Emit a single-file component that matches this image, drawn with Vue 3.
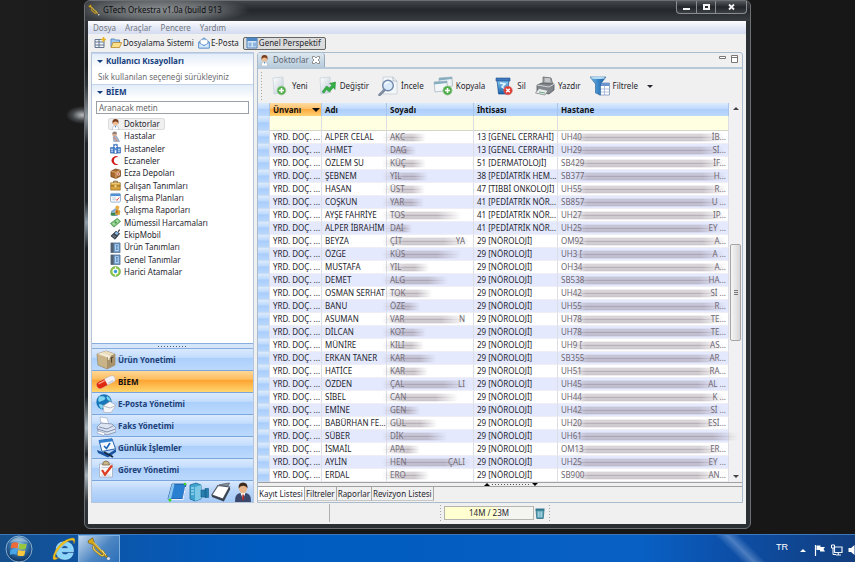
<script setup>
import { ref } from 'vue'

const menus = ['Dosya', 'Araçlar', 'Pencere', 'Yardım']

const tree = [
  ['doctor', 'Doktorlar'],
  ['patient', 'Hastalar'],
  ['hospital', 'Hastaneler'],
  ['crescent', 'Eczaneler'],
  ['crate', 'Ecza Depoları'],
  ['briefcase', 'Çalışan Tanımları'],
  ['calendar', 'Çalışma Planları'],
  ['report', 'Çalışma Raporları'],
  ['money', 'Mümessil Harcamaları'],
  ['mobile', 'EkipMobil'],
  ['book', 'Ürün Tanımları'],
  ['book', 'Genel Tanımlar'],
  ['sync', 'Harici Atamalar'],
]

const modules = [
  ['box', 'Ürün Yonetimi'],
  ['pill', 'BİEM'],
  ['globemail', 'E-Posta Yönetimi'],
  ['fax', 'Faks Yönetimi'],
  ['journal', 'Günlük İşlemler'],
  ['task', 'Görev Yönetimi'],
]

const shortcuts = [
  ['bluebook', 'Defter'],
  ['server', 'Sunucu'],
  ['notepad', 'Notlar'],
  ['person', 'Kullanıcı'],
]

const actions = [
  ['new', 'Yeni'],
  ['edit', 'Değiştir'],
  ['inspect', 'İncele'],
  ['copy', 'Kopyala'],
  ['trash', 'Sil'],
  ['print', 'Yazdır'],
  ['filter', 'Filtrele'],
]

const sheets = ['Kayıt Listesi', 'Filtreler', 'Raporlar', 'Revizyon Listesi']

const N = '29 [NÖROLOJİ]'
// name, visible surname start, smear width, visible surname end, specialty, hospital start, hospital end
const rows = [
  ['ALPER CELAL', 'AKC', 44, '', '13 [GENEL CERRAHİ]', 'UH40', 'İB...'],
  ['AHMET', 'DAG', 34, '', '13 [GENEL CERRAHİ]', 'UH29', 'Sİ...'],
  ['ÖZLEM SU', 'KÜÇ', 44, '', '51 [DERMATOLOJİ]', 'SB429', 'İF...'],
  ['ŞEBNEM', 'YIL', 46, '', '38 [PEDİATRİK HEM...', 'SB377', 'H...'],
  ['HASAN', 'ÜST', 43, '', '47 [TIBBİ ONKOLOJİ]', 'UH55', 'R...'],
  ['COŞKUN', 'YAR', 42, '', '41 [PEDİATRİK NÖR...', 'SB857', 'U ...'],
  ['AYŞE FAHRİYE', 'TOS', 79, '', '41 [PEDİATRİK NÖR...', 'UH27', 'IP...'],
  ['ALPER İBRAHİM', 'DAİ', 30, '', '41 [PEDİATRİK NÖR...', 'UH25', 'EY ...'],
  ['BEYZA', 'ÇİT', 88, 'YA', N, 'OM92', 'A...'],
  ['ÖZGE', 'KÜS', 79, '', N, 'UH3 [', 'A ...'],
  ['MUSTAFA', 'YIL', 47, '', N, 'OH34', 'A...'],
  ['DEMET', 'ALG', 66, '', N, 'SB538', 'HA...'],
  ['OSMAN SERHAT', 'TOK', 50, '', N, 'UH42', 'Sİ ...'],
  ['BANU', 'ÖZE', 38, '', N, 'UH55', 'R...'],
  ['ASUMAN', 'VAR', 85, 'N', N, 'UH78', 'TE...'],
  ['DİLCAN', 'KOT', 44, '', N, 'UH78', 'TE...'],
  ['MÜNİRE', 'KILI', 42, '', N, 'UH9 [', 'AS...'],
  ['ERKAN TANER', 'KAR', 54, '', N, 'SB355', 'AR...'],
  ['HATİCE', 'KAR', 46, '', N, 'UH51', 'RA...'],
  ['ÖZDEN', 'ÇAL', 88, 'LI', N, 'UH45', 'AL ...'],
  ['SİBEL', 'CAN', 76, '', N, 'UH44', 'K ...'],
  ['EMİNE', 'GEN', 38, '', N, 'UH42', 'Sİ ...'],
  ['BABÜRHAN FE...', 'GÜL', 55, '', N, 'UH20', 'ESİ...'],
  ['SÜBER', 'DİK', 65, '', N, 'UH61', ''],
  ['İSMAİL', 'APA', 38, '', N, 'OM13', 'ER...'],
  ['AYLİN', 'HEN', 89, 'ÇALI', N, 'UH25', 'EY ...'],
  ['ERDAL', 'ERO', 47, '', N, 'SB900', 'AN...'],
]

const query = ref('')
const selected = ref('Doktorlar')
const activeModule = ref('BİEM')
const activeSheet = ref('Kayıt Listesi')
</script>

<template>
  <svg class="sprite" width="0" height="0" aria-hidden="true">
    <defs>
      <linearGradient id="gBlue" x1="0" y1="0" x2="0" y2="1"><stop offset="0" stop-color="#8fd0f5" /><stop offset="1" stop-color="#1560a8" /></linearGradient>
      <linearGradient id="gPage" x1="0" y1="0" x2="1" y2="1"><stop offset="0" stop-color="#ffffff" /><stop offset="1" stop-color="#bccbd6" /></linearGradient>
      <linearGradient id="gFunnel" x1="0" y1="0" x2="1" y2="0"><stop offset="0" stop-color="#7dbbe6" /><stop offset=".5" stop-color="#3a87c8" /><stop offset="1" stop-color="#1c5c9c" /></linearGradient>
      <radialGradient id="gOrb" cx=".5" cy=".35" r=".65"><stop offset="0" stop-color="#9fd0ee" /><stop offset=".55" stop-color="#2f6da6" /><stop offset="1" stop-color="#0b2c57" /></radialGradient>
    </defs>
    <symbol id="i-trumpet" viewBox="0 0 24 24">
      <path d="M1 4 5.500.8 7.500 6 20.500 19.500 19 20.500 6 7.500 1.500 6Z" fill="#d6a91c" stroke="#6b4f06" stroke-width=".6" />
      <path d="M7 9q-1.500 2 1 4.500l5.500 4.500q3 1.500 3.500-.5T15 13.500" fill="none" stroke="#8a6a10" stroke-width="2.200" />
      <path d="M7 9q-1.500 2 1 4.500l5.500 4.500q3 1.500 3.500-.5T15 13.500" fill="none" stroke="#e8c850" stroke-width="1.200" />
      <path d="M7 5.500 19 18" stroke="#fff0a0" stroke-width=".8" /><circle cx="21.500" cy="21.500" r="1.600" fill="#ddd" />
    </symbol>
    <symbol id="i-perspective" viewBox="0 0 12 12">
      <path d="M1 2.500h9v8H1zM1 5h9M5 2.500v8M1 8h9" fill="#f3f8ff" stroke="#64758c" />
      <path d="M9.500 0v5M7 2.500h5" stroke="#e6b422" stroke-width="1.600" />
    </symbol>
    <symbol id="i-folder" viewBox="0 0 12 12">
      <path d="M1 10V2h3.500L5.500 3H9.500v3" fill="#9ec8f2" stroke="#4579b5" stroke-width=".8" />
      <path d="M3 5.500h8.700L9.500 10.500H1Z" fill="#fbe08c" stroke="#b8872a" stroke-width=".8" />
    </symbol>
    <symbol id="i-mail" viewBox="0 0 12 12">
      <path d="M.7 5 6 .8 11.300 5v6H.7Z" fill="#8fbdec" stroke="#4f87c4" stroke-width=".8" />
      <path d="M2.500 2.800h7v5h-7z" fill="#fff" stroke="#9ab" stroke-width=".4" /><path d="M.7 5.500 6 8.800l5.300-3.300V11H.7Z" fill="#d7eafc" stroke="#5a90cc" stroke-width=".8" />
    </symbol>
    <symbol id="i-window" viewBox="0 0 12 12">
      <path d="M1 1h10v10H1z" fill="#d3e5f7" stroke="#4b7cb5" /><path d="M1 1h10v3H1z" fill="#4d88c6" /><path d="M2.500 5.500h3v4h-3zM7 5.500h3v4H7z" fill="#8bb5e0" />
    </symbol>
    <symbol id="i-doctor" viewBox="0 0 12 12">
      <path d="M2.500 12q0-5 3.500-5t3.500 5Z" fill="#fff" stroke="#9aa7b5" stroke-width=".6" /><path d="M5.200 7.500 6 10l.8-2.500Z" fill="#4c93d6" />
      <circle cx="6" cy="4.300" r="2.800" fill="#f0bd93" /><path d="M2.800 5.500Q1.800 0 6 0t3.200 5.500Q8.500 2.800 6 2.800T2.800 5.500Z" fill="#7c3d1c" />
    </symbol>
    <symbol id="i-patient" viewBox="0 0 12 12">
      <circle cx="5" cy="3.500" r="2.500" fill="#d8a98c" /><path d="M2.500 3.200Q2.600.4 5.200.5T7.600 3Z" fill="#8a7f7c" /><path d="M3.500 6h4l3 5.500H4Z" fill="#a9b8d2" stroke="#7683a0" stroke-width=".5" /><path d="m4 7 4 4" stroke="#d08c70" stroke-width="1.300" />
    </symbol>
    <symbol id="i-hospital" viewBox="0 0 12 12">
      <path d="M.5 5h11v6H.5zM4 1.500h4V11H4z" fill="#5b93d8" stroke="#2d62aa" stroke-width=".7" /><path d="M6 2.500v3M4.500 4h3M1.500 7h1.500M9 7h1.500M1.500 9h1.500M9 9h1.500" stroke="#fff" /><path d="M5.200 8h1.600v3H5.200z" fill="#fff" />
    </symbol>
    <symbol id="i-crescent" viewBox="0 0 12 12"><path d="M9.500 2.400A4.700 4.700 0 1 0 9.500 9.700 3.900 3.900 0 1 1 9.500 2.400Z" fill="#d11a1a" /></symbol>
    <symbol id="i-crate" viewBox="0 0 12 12">
      <path d="M1 3.500 6 1l5.500 1.500v6.500L6.500 11.500 1 9.500Z" fill="#a8682f" stroke="#5d3310" stroke-width=".7" /><path d="m1 3.500 5.500 1.300 5-2.300M6.500 4.800v6.700" stroke="#e5b57a" fill="none" /><circle cx="9" cy="6.500" r="1.800" fill="#f4e8dc" /><path d="M9 5.500v2M8 6.500h2" stroke="#c22" stroke-width=".7" />
    </symbol>
    <symbol id="i-briefcase" viewBox="0 0 12 12">
      <path d="M4 3V1.300h4V3" fill="none" stroke="#7a5418" /><path d="M.8 3h10.400v8H.8z" fill="#d9a440" stroke="#8a6017" stroke-width=".7" /><path d="M.8 6.500h10.400" stroke="#8a6017" /><path d="M5 5.700h2v2H5z" fill="#f7e6a8" /><path d="M1.500 4h9" stroke="#f6d684" />
    </symbol>
    <symbol id="i-calendar" viewBox="0 0 12 12">
      <rect x=".6" y="1.500" width="10.800" height="9.500" rx="1.300" fill="#fff" stroke="#7799bb" stroke-width=".8" /><path d="M.8 2h10.400v2.500H.8z" fill="#4f8fd3" /><path d="M2.500 6.500h4M2.500 8.500h3" stroke="#9ab4cc" stroke-width=".8" /><path d="m6.500 8 1 1.200L10 6" stroke="#d33" fill="none" />
    </symbol>
    <symbol id="i-report" viewBox="0 0 12 12">
      <path d="M1.500 7 6 4l5 3-3 4.500H2Z" fill="#8eb3e0" stroke="#456a9c" stroke-width=".6" /><circle cx="8" cy="2.800" r="2.200" fill="#e8b04a" /><path d="M5.800 7q0-2.500 2.400-2.500T10.800 7.500v3h-5Z" fill="#dda72d" /><path d="M.8 8.500h5v2.800h-5z" fill="#3d8c46" /><path d="M7.500 6v3" stroke="#9c281c" />
    </symbol>
    <symbol id="i-money" viewBox="0 0 12 12">
      <path d="M.5 7 8 1.500l3.500 3.300L4.200 11Z" fill="#77bf75" stroke="#398a40" stroke-width=".8" /><path d="m2.500 7 5.500-4 1.800 1.800L4.500 9Z" fill="#b5e0ae" /><circle cx="6.100" cy="6" r="1.300" fill="#4b9a51" />
    </symbol>
    <symbol id="i-mobile" viewBox="0 0 12 12">
      <path d="m1 7.500 5.500-5 4 2.500-5 6.200Z" fill="#3c4653" stroke="#1c232c" stroke-width=".7" /><path d="m5 4.500 2-1.600 2.300 1.600-1.600 2Z" fill="#8fc2ee" /><path d="m2.500 7.500 3 2M3.500 6.500l3 2" stroke="#a8b2bd" stroke-width=".6" /><path d="m9 3 1.500-2.300" stroke="#1c232c" stroke-width="1.200" />
    </symbol>
    <symbol id="i-book" viewBox="0 0 12 12">
      <path d="M1 1h10v10.500H1z" fill="#6d97c4" stroke="#3c5877" stroke-width=".6" /><path d="M1 1h3v10.500H1z" fill="#54606d" /><path d="M5.500 2.500h4v7.500h-4z" fill="#b4d5f2" /><path d="M6.500 4h2M7.500 4v4M6.500 8h2" stroke="#2c66a5" stroke-width=".8" />
    </symbol>
    <symbol id="i-sync" viewBox="0 0 12 12">
      <circle cx="6" cy="6" r="4.400" fill="none" stroke="#8cc84b" stroke-width="2.200" /><path d="M6 .5v2.500M6 9v2.500" stroke="#fff" /><circle cx="6" cy="6" r="1.900" fill="#3d9cd8" /><circle cx="6" cy="6" r="5.500" fill="none" stroke="#4f8c24" stroke-width=".5" />
    </symbol>
    <symbol id="i-box" viewBox="0 0 20 20">
      <path d="m1 4 9-3 9 3v11l-8 4L2 15Z" fill="#c9b48a" stroke="#8d7a58" stroke-width=".6" /><path d="m1 4 10 3.500L19 4l-9-3Z" fill="#e9dcbc" /><path d="M11 7.500 19 4v11l-8 4Z" fill="#a8926c" /><path d="m5 2.700 9.500 3.200v3L12 10V7.300L3.500 4Z" fill="#f3edda" /><path d="M15.500 7.500v5M13.700 8.500l3.500-1.500" stroke="#55462e" />
    </symbol>
    <symbol id="i-pill" viewBox="0 0 20 20">
      <g transform="rotate(-27 10 10)"><rect x="0" y="6.500" width="20" height="7" rx="3.500" fill="#f2f3f8" stroke="#b9a7a0" stroke-width=".5" /><path d="M10 6.500v7H3.500a3.500 3.500 0 0 1 0-7Z" fill="#e02a10" /><path d="M3 8.200h6" stroke="#ff9c7e" stroke-width="1.400" stroke-linecap="round" /><path d="M11 12h6" stroke="#c5c8da" stroke-width="1.200" /></g>
    </symbol>
    <symbol id="i-globemail" viewBox="0 0 20 20">
      <circle cx="8" cy="8" r="7.700" fill="#1976b8" /><path d="M3 2.500q5-1 6 1t-2 3-4 1.500Q1.500 6 3 2.500M11 2q3 1.500 4 5-3 0-4-2t0-3M3 10q4 0 4 2t-1 3Q3 13.500 3 10" fill="#7fd4ef" /><path d="m7 12 7-4.500 6 4-5 7H8Z" fill="#f5f6f8" stroke="#aab" stroke-width=".6" /><path d="m7.200 12 7 2 5.500-2.500" fill="none" stroke="#b5b8c0" />
    </symbol>
    <symbol id="i-fax" viewBox="0 0 20 20">
      <path d="m4 1 7 1 2 7-8-2Z" fill="#fff" stroke="#9aa8c0" stroke-width=".6" /><path d="m1 11 4-4 11 1 4 4v4l-9 3-9-4Z" fill="#dde4f1" stroke="#7c8ba8" stroke-width=".8" /><path d="m3 11 8 2 6-3M1.500 13l9.500 3 8.500-3" fill="none" stroke="#7f90b0" /><path d="m2 15 7 2-1 2.500-7-2.500Z" fill="#fff" stroke="#8b98b0" stroke-width=".6" />
    </symbol>
    <symbol id="i-journal" viewBox="0 0 20 20">
      <path d="m1 12 11 4 8-5v3l-8 5.500L2 15Z" fill="#1b54a0" /><path d="M3 2.500 16 .8l3.500 10L6 13.500Z" fill="#f5f9fe" stroke="#2863ac" /><path d="M3 2.500 16 .8l.9 2.500L3.800 5Z" fill="#3280d0" /><path d="m8 8 2.500 2.500L14 5" stroke="#1f66b8" stroke-width="1.700" fill="none" /><path d="m8 14 9 5" stroke="#182c48" stroke-width="2" />
    </symbol>
    <symbol id="i-task" viewBox="0 0 20 20">
      <path d="M3.500 4h13v13h-13z" fill="#f7f8fb" stroke="#a3aebe" stroke-width=".8" /><path d="M6.500 5q0-4 3.500-4t3.500 4Z" fill="#cbb78a" stroke="#77664a" stroke-width=".8" /><path d="M5.500 7.500h9M5.500 15h9" stroke="#c7ced8" /><path d="m6 10 3 4.500 7-9" stroke="#dc3b20" stroke-width="2.200" fill="none" />
    </symbol>
    <symbol id="i-bluebook" viewBox="0 0 20 20">
      <path d="M5 2h14l-3 15H1Z" fill="#2b7fd1" stroke="#134b8c" stroke-width=".8" /><path d="M5 2h2.500L4 17H1Z" fill="#8cc4f0" /><path d="M2 17.500h14L18.500 5" fill="none" stroke="#eef" stroke-width="1.200" /><circle cx="3" cy="18" r="1.500" fill="#3ed420" /><circle cx="18" cy="2" r="1.300" fill="#3ed420" />
    </symbol>
    <symbol id="i-server" viewBox="0 0 20 20">
      <path d="m1 3 6-2 5 2v14l-6 2-5-2Z" fill="#3fa4cf" stroke="#1c6a96" stroke-width=".8" /><path d="m6 5 6-2v14l-6 2Z" fill="#7cc8e6" /><path d="M2 6h3M2 9h3M2 12h3" stroke="#c7eefa" /><path d="M12 8h5v7h-5zM16 6.500h3.500v9H16z" fill="#2a7fb0" stroke="#135a86" stroke-width=".6" />
    </symbol>
    <symbol id="i-notepad" viewBox="0 0 20 20">
      <path d="M7 3.500 18.500 5 12 17 .8 13Z" fill="#fff" stroke="#555d6a" stroke-width="1.200" /><path d="m.8 13 11.200 4 6.500-12 .8 2-6.500 12.500L1 15Z" fill="#39424f" /><path d="m8 3 9 1.300L18.500 1 12 2Z" fill="#8a929e" stroke="#4d5561" stroke-width=".7" />
    </symbol>
    <symbol id="i-person" viewBox="0 0 20 20">
      <path d="M2 20q-.5-8 5-9l6 0q5.500 1 5 9Z" fill="#3a486e" /><path d="M7.500 11h5L10 17Z" fill="#fff" /><path d="M9.400 12.500h1.400l.5 4.500-1.200 2-1-2Z" fill="#b02a2a" /><ellipse cx="10" cy="6.500" rx="4" ry="5" fill="#e9b48a" /><path d="M5.700 6.500Q5 .5 10 .5t4.500 6Q13 3.500 10 3.800T5.700 6.500Z" fill="#3f2a1e" />
    </symbol>
    <symbol id="i-new" viewBox="0 0 20 20">
      <path d="m4 2 10-1 .5 15.500L5 18Z" fill="url(#gPage)" stroke="#c6cfd8" stroke-width=".7" /><circle cx="12.500" cy="14.500" r="4.300" fill="#4fae4a" stroke="#8fc48c" stroke-width=".8" /><path d="M12.500 12v5M10 14.500h5" stroke="#fff" stroke-width="1.600" />
    </symbol>
    <symbol id="i-edit" viewBox="0 0 20 20">
      <path d="m3 2 10-1 .5 15.500L4 18Z" fill="url(#gPage)" stroke="#c6cfd8" stroke-width=".7" /><path d="m5 16 4.500-6 3 2 2.500-3-2.500-1.500L18.500 6l-.5 7.500-1.700-2L12.500 16l-3-2.500L7 17Z" fill="#35b043" stroke="#1c8030" stroke-width=".5" />
    </symbol>
    <symbol id="i-inspect" viewBox="0 0 20 20">
      <path d="M5 1h10l4 4v13H5z" fill="#f4f7fa" stroke="#c4ccd4" stroke-width=".8" /><path d="M15 1v4h4" fill="none" stroke="#b4bec8" /><path d="m6.500 14-5 5" stroke="#7d8ca0" stroke-width="2.600" stroke-linecap="round" /><circle cx="10" cy="9.500" r="5.300" fill="#d5e8fa" fill-opacity=".85" stroke="#7089a8" stroke-width="1.400" /><path d="M7 8.500q1-2.500 4-2.300" stroke="#fff" stroke-width="1.300" fill="none" />
    </symbol>
    <symbol id="i-copy" viewBox="0 0 20 20">
      <path d="m6 2 13-1 .5 9-13 1.500Z" fill="#eef2f5" stroke="#a9b8c4" stroke-width=".8" /><path d="m6 2 13-1v2L6 4.500Z" fill="#86aebf" /><path d="m1 6 13-1 .5 9.500L2 16Z" fill="#f3f6f8" stroke="#a9b8c4" stroke-width=".8" /><path d="m1 6 13-1v2L1.200 8.500Z" fill="#86aebf" /><circle cx="14.500" cy="14.500" r="4.500" fill="#4fae4a" stroke="#8fc48c" stroke-width=".8" /><path d="M14.500 12v5M12 14.500h5" stroke="#fff" stroke-width="1.600" />
    </symbol>
    <symbol id="i-trash" viewBox="0 0 20 20">
      <path d="M3 4h12l-1.500 14h-9Z" fill="url(#gBlue)" stroke="#1b4f90" stroke-width=".7" /><path d="M2 2h14v3H2z" fill="#3f78bc" stroke="#1b4f90" stroke-width=".6" /><path d="m6 7 5 1-3 3 3 2" stroke="#e7f5ff" stroke-width="1.500" fill="none" /><circle cx="14" cy="14.500" r="4.300" fill="#e03a33" stroke="#c86a66" stroke-width=".6" /><path d="m12.200 12.700 3.600 3.600m0-3.600-3.600 3.600" stroke="#fff" stroke-width="1.500" />
    </symbol>
    <symbol id="i-print" viewBox="0 0 20 20">
      <path d="m8 1 8 1 2 7H8Z" fill="#a4a9ac" stroke="#62676a" stroke-width=".8" /><path d="M10 3h5M10 5h5" stroke="#e6e8e8" /><path d="m2 9 5-2 12 1v6l-5 4-12-3Z" fill="#80868a" stroke="#54595c" stroke-width=".8" /><path d="m2 9 12 2 5-3" fill="none" stroke="#d2d6d8" /><path d="m4 12.500-3.500 4.500L10 19l3-4.500Z" fill="#e9ecea" stroke="#81878a" stroke-width=".8" /><path d="m4 16 6 1" stroke="#69a98b" />
    </symbol>
    <symbol id="i-filter" viewBox="0 0 20 20">
      <path d="M9 7h10.500v12H9z" fill="#fff" stroke="#7c93ba" stroke-width=".8" /><path d="M9 7h10.500v3H9z" fill="#6c95d0" /><path d="M9 13h10.500M9 16h10.500M14.500 10v9" stroke="#9fb3d5" stroke-width=".8" /><path d="M0 1h16L10.500 8v11L5.500 17V8Z" fill="url(#gFunnel)" stroke="#275f96" stroke-width=".6" /><ellipse cx="8" cy="1.800" rx="7.500" ry="1.300" fill="#b4dbf4" />
    </symbol>
    <symbol id="i-bin" viewBox="0 0 12 12"><path d="M2 3h8l-.8 8.500H2.800Z" fill="#5aa3b8" stroke="#1f6178" stroke-width=".7" /><path d="M1.500 1.500h9v1.700h-9z" fill="#2f7990" /><path d="M4.300 4.500v5.500M6 4.500v5.500M7.700 4.500v5.500" stroke="#d7f0f5" stroke-width=".7" /></symbol>
    <symbol id="i-orb" viewBox="0 0 28 28">
      <circle cx="14" cy="14" r="13" fill="url(#gOrb)" stroke="#86aed0" stroke-width="1" /><path d="M6.500 8.500q3.500-2.200 7-.5l-1 5.500q-3.500-1.500-6.800.3Z" fill="#ee6a36" /><path d="M14.500 8.300q3.500 1.600 7.300.2l-1.200 5.500q-3.500 1.300-7-.3Z" fill="#9ac83c" /><path d="M5.500 15q3.300-1.700 6.800-.3l-1 5q-3.300-1.300-6.500.2Z" fill="#49a7e8" /><path d="M13.200 15q3.500 1.500 7.200.3L19.300 20.500q-3.500 1.300-7-.3Z" fill="#fcc73c" /><path d="M4 8Q14-4 24 8 14 4 4 8Z" fill="#fff" opacity=".35" />
    </symbol>
    <symbol id="i-ie" viewBox="0 0 24 24">
      <path fill-rule="evenodd" d="M21.500 14.800H9.300q.6 3 3.700 3 2.200 0 3.200-1.500h5Q19.500 22.500 12.800 22.500 4 22.300 4 13.500T12.800 4.700q8.900.3 8.700 10.100ZM9.300 11.400h7q-.6-2.900-3.500-2.900t-3.500 2.900Z" fill="#8ad6fa" stroke="#d6f2ff" stroke-width=".5" />
      <path d="M7 20.500Q2.500 24 1.300 22.200 0 20 3.500 13.500 8 6 14.500 2.800 21-.3 22.500 1.800q1 1.700-.6 5.200.3-3.700-1.700-3.700Q16 3 10 8.500 3.500 15.500 3.200 19q-.2 2.500 3.800 1.500Z" fill="#f4c21c" stroke="#b98a0a" stroke-width=".3" />
    </symbol>
    <symbol id="i-flag" viewBox="0 0 12 12"><path d="M1.500 1v11" stroke="#fff" stroke-width="1.200" /><path d="M2.500 1.500h4v1.500h4.500L9.500 5l1.500 2.500H6V6H2.500Z" fill="#fff" /></symbol>
    <symbol id="i-network" viewBox="0 0 12 12"><path d="M3.500 3h7.500v5.500H3.500zM5 11h5M7.300 8.500V11" fill="none" stroke="#e8eef6" stroke-width="1.200" /><path d="M.5 1h3v3h-3zM2 4v6.500h3" fill="none" stroke="#fff" /></symbol>
    <symbol id="i-sound" viewBox="0 0 12 12"><path d="M.5 4h2.500L6.500 1v10L3 8H.5Z" fill="#fff" /><path d="M8 4q1.500 2 0 4M9.700 2.500q2.500 3.500 0 7" fill="none" stroke="#fff" /></symbol>
  </svg>

  <div class="desktop">
    <main class="wallpaper">
      <section class="window">
        <header class="titlebar">
          <svg class="ico12"><use href="#i-trumpet" /></svg>
          <h1>GTech Orkestra v1.0a (build 913</h1>
          <div class="caption">
            <button aria-label="Simge durumuna küçült"><svg width="9" height="9"><path d="M1 5h7v2H1z" fill="#f4f4f4" /></svg></button>
            <button aria-label="Ekranı kapla"><svg width="9" height="9"><path d="M2 2h5v4H2z" fill="none" stroke="#f4f4f4" stroke-width="2" /></svg></button>
            <button class="wide" aria-label="Kapat"><svg width="9" height="9"><path d="m2 1.500 5 5m0-5-5 5" stroke="#f4f4f4" stroke-width="1.800" /></svg></button>
          </div>
        </header>

        <div class="client">
          <nav class="menubar"><button v-for="m in menus" :key="m">{{ m }}</button></nav>

          <div class="perspectives">
            <button aria-label="Perspektif aç"><svg class="ico12"><use href="#i-perspective" /></svg></button>
            <button><svg class="ico12"><use href="#i-folder" /></svg>Dosyalama Sistemi</button>
            <button><svg class="ico12"><use href="#i-mail" /></svg>E-Posta</button>
            <button class="on"><svg class="ico12"><use href="#i-window" /></svg>Genel Perspektif</button>
          </div>

          <div class="work">
            <aside class="side">
              <h2><i class="tri"></i>Kullanıcı Kısayolları</h2>
              <p class="hint">Sık kullanılan seçeneği sürükleyiniz</p>
              <h2><i class="tri"></i>BİEM</h2>
              <div class="search"><input v-model="query" type="text" placeholder="Aranacak metin" aria-label="Aranacak metin" /></div>
              <ul class="tree">
                <li v-for="t in tree" :key="t[1]">
                  <button :class="{ on: selected === t[1] }" @click="selected = t[1]">
                    <svg class="ico11"><use :href="'#i-' + t[0]" /></svg>{{ t[1] }}
                  </button>
                </li>
              </ul>
              <div class="sash"></div>
              <nav class="modules">
                <button v-for="m in modules" :key="m[1]" :class="{ on: activeModule === m[1] }" @click="activeModule = m[1]">
                  <svg class="ico20"><use :href="'#i-' + m[0]" /></svg>{{ m[1] }}
                </button>
              </nav>
              <div class="shortcuts">
                <button v-for="s in shortcuts" :key="s[0]" :aria-label="s[1]"><svg class="ico20"><use :href="'#i-' + s[0]" /></svg></button>
              </div>
            </aside>

            <section class="editor">
              <div class="tabs">
                <div class="tab"><svg class="ico11"><use href="#i-doctor" /></svg>Doktorlar
                  <svg width="8" height="8" viewBox="0 0 8 8"><path d="M.5.500h2L4 2 5.500.500h2v2L6 4l1.500 1.500v2h-2L4 6 2.500 7.500h-2v-2L2 4 .5 2.500Z" fill="#fff" stroke="#777" stroke-width=".8" /></svg>
                </div>
                <svg width="22" height="9" viewBox="0 0 22 9"><path d="M2.500 1.500h6v2h-6zM14.500.500h6v7h-6zM14.500 2.500h6" fill="#fff" stroke="#777" /></svg>
              </div>

              <div class="toolbar">
                <button v-for="a in actions" :key="a[0]"><svg class="ico20"><use :href="'#i-' + a[0]" /></svg>{{ a[1] }}</button>
                <i class="tri"></i>
              </div>

              <div class="gridwrap">
                <table>
                  <colgroup><col class="c0" /><col class="c1" /><col class="c2" /><col class="c3" /><col class="c4" /><col /></colgroup>
                  <thead>
                    <tr><th></th><th class="sorted">Ünvanı<i class="tri"></i></th><th>Adı</th><th>Soyadı</th><th>İhtisası</th><th>Hastane</th></tr>
                    <tr class="filters"><td class="gut"></td><td></td><td></td><td></td><td></td><td></td></tr>
                  </thead>
                  <tbody>
                    <tr v-for="(r, i) in rows" :key="i">
                      <td class="gut"></td>
                      <td>YRD. DOÇ. ...</td>
                      <td>{{ r[0] }}</td>
                      <td class="masked">
                        <div class="name">{{ r[1] }}<span>{{ r[3] }}</span></div>
                        <i class="smear" :style="{ width: r[2] + 'px' }"></i>
                      </td>
                      <td>{{ r[4] }}</td>
                      <td class="masked">
                        <div class="place"><span>{{ r[5] }}</span><i class="smear long"></i><span>{{ r[6] }}</span></div>
                      </td>
                    </tr>
                  </tbody>
                </table>
                <div class="scroll"><i class="tri up"></i><div class="track"><div class="thumb"></div></div><i class="tri"></i></div>
              </div>

              <div class="split"><i class="tri up"></i><b></b><i class="tri"></i></div>
              <div class="sheets">
                <button v-for="s in sheets" :key="s" :class="{ on: activeSheet === s }" @click="activeSheet = s">{{ s }}</button>
              </div>
            </section>
          </div>

          <footer class="status">
            <div class="cell"></div>
            <div class="heap">14M / 23M</div>
            <button aria-label="Belleği temizle"><svg class="ico12"><use href="#i-bin" /></svg></button>
            <div class="end"></div>
          </footer>
        </div>
      </section>
    </main>

    <footer class="taskbar">
      <button aria-label="Başlat"><svg width="28" height="28"><use href="#i-orb" /></svg></button>
      <button aria-label="Internet Explorer"><svg width="24" height="24"><use href="#i-ie" /></svg></button>
      <button class="running" aria-label="GTech Orkestra"><svg width="24" height="24"><use href="#i-trumpet" /></svg></button>
      <div class="tray">
        <span>TR</span>
        <i class="tri up"></i>
        <svg class="ico12"><use href="#i-flag" /></svg>
        <svg class="ico12"><use href="#i-network" /></svg>
        <svg class="ico12"><use href="#i-sound" /></svg>
      </div>
    </footer>
  </div>
</template>

<style>
body { background: #161616; overflow: hidden; }
</style>

<style scoped>
* { box-sizing: border-box; }
.sprite { position: absolute; }
.desktop { display: flex; flex-direction: column; min-height: 100vh; font: 8px/12px "Noto Sans", "Open Sans", sans-serif; color: #26262e; }
button { display: flex; align-items: center; gap: 2px; margin: 0; padding: 0; border: 0; background: none; font: inherit; color: inherit; white-space: nowrap; }
svg { flex: none; display: block; }
.ico11 { width: 11px; height: 11px; }
.ico12 { width: 12px; height: 12px; }
.ico20 { width: 20px; height: 20px; }
h1, h2, p, ul { margin: 0; padding: 0; font-size: inherit; }
.tri { flex: none; width: 0; height: 0; border: 3px solid transparent; border-top-color: currentColor; border-bottom: 0; }
.tri.up { border-top: 0; border-bottom: 3px solid currentColor; }

.wallpaper { flex: 1; display: flex; padding: 0 104px 5px 84px; background: radial-gradient(ellipse 16px 9px at 82px 115px, #b8bcbf, #44474a 60%, transparent), linear-gradient(90deg, #1d1d1d, #161616 30%, #171717); }
.window { flex: 1; min-width: 0; display: flex; flex-direction: column; padding: 0 4px 4px 3px; border: 1px solid #6c7074; border-radius: 6px; background: linear-gradient(180deg, #3a3d40 0, #1a1d20 12%, #30373c 16%, #8d979e 22%, #20262b 27%, #20262b 38%, #90a0ac 42%, #1c2227 47%, #1c2227 75%, #a8b4bc 81%, #252b30 86%, #a8b4bc 90%, #30363b 95%, #2a2f34) 0 0 / 4px 100% no-repeat, #2a2f34; }
.titlebar { display: flex; align-items: flex-start; gap: 3px; height: 20px; margin: 0 -4px 0 -3px; padding-left: 3px; border-radius: 5px 5px 0 0; background: radial-gradient(ellipse 90px 14px at 75px 9px, #8b8e91, #66696c 60%, transparent), linear-gradient(#42464a, #24282c 45%, #3a3e42); color: #0b0c0e; }
.titlebar .ico12 { margin-top: 3px; }
.titlebar h1 { flex: 1; margin-top: 3px; font-size: 8px; font-weight: 400; }
.caption { display: flex; height: 13px; margin-right: 3px; border: 1px solid #8a8d90; border-top: 0; border-radius: 0 0 4px 4px; background: linear-gradient(#55595d, #23272b 50%, #3b4044); }
.caption button { width: 19px; justify-content: center; }
.caption button + button { border-left: 1px solid #8a8d90; }
.caption .wide { width: 31px; }

.client { flex: 1; min-height: 0; display: flex; flex-direction: column; background: #f0f0f0; }
.menubar { display: flex; gap: 9px; height: 13px; padding-left: 5px; background: linear-gradient(#fcfdff, #e4e9f6 50%, #d5dcf0); color: #72777f; }
.perspectives { display: flex; align-items: center; height: 18px; padding-left: 6px; gap: 4px; }
.perspectives button { height: 13px; gap: 1px; }
.perspectives .on { padding: 0 4px 0 2px; border: 1px solid #666; border-radius: 2px; background: #dcdcdc; }

.work { flex: 1; min-height: 0; display: flex; gap: 3px; padding: 0 3px; }
.side { width: 163px; display: flex; flex-direction: column; border: 1px solid #b5c6dc; background: #fff; }
.side h2 { display: flex; align-items: center; gap: 3px; height: 15px; padding-left: 5px; border-top: 1px solid #c3d5eb; background: linear-gradient(#e3edf9, #fff); color: #153e7e; font-weight: 700; }
.hint { height: 16px; padding: 3px 6px 0; color: #6c6c70; }
.search { padding: 2px 4px 0; }
.search input { display: block; width: 100%; height: 13px; padding: 0 2px; border: 1px solid #9aa0a8; background: #fff; font: inherit; }
.search input::placeholder { color: #666; opacity: 1; }
.tree { height: 168px; display: grid; grid-auto-rows: 12px; align-content: space-between; padding: 4px 16px; list-style: none; }
.tree button { height: 12px; padding: 0 4px 0 1px; gap: 3px; border: 1px solid transparent; border-radius: 2px; }
.tree .on { border-color: #dcdcdc; background: #f0f0f0; }
.sash { height: 6px; margin-top: auto; border: 1px solid #88aede; border-width: 1px 0; background: repeating-linear-gradient(90deg, #4c6080 0 1px, transparent 1px 3px) center / 30px 1px no-repeat, #d5e6fb; }
.modules { display: grid; grid-auto-rows: 22px; color: #1d4077; font-weight: 700; }
.modules button { padding-left: 4px; gap: 2px; border-bottom: 1px solid #7ba6dc; background: linear-gradient(#d9e9fe, #c4ddfd 40%, #abcffb 42%, #bcd9fd); }
.modules .on { background: linear-gradient(#ffd797, #ffbd5e 40%, #fca230 42%, #ffd66e); color: #111; }
.shortcuts { display: flex; justify-content: flex-end; gap: 2px; height: 21px; background: linear-gradient(#d9e9fe, #bcd7fa 40%, #a5caf8); }

.editor { flex: 1; min-width: 0; display: flex; flex-direction: column; border: 1px solid #a8bccd; border-radius: 3px 3px 0 0; }
.tabs { display: flex; justify-content: space-between; height: 16px; padding-right: 3px; border-bottom: 2px solid #b5c9da; color: #5b6571; }
.tabs > svg { margin-top: 2px; }
.tab { display: flex; align-items: center; gap: 3px; padding: 0 4px 0 1px; border-right: 1px solid #98aabb; border-radius: 0 3px 0 0; background: linear-gradient(#dde7ef, #b9cddd); }
.toolbar { display: flex; align-items: center; gap: 9px; height: 34px; margin-left: 3px; padding-left: 8px; background: repeating-linear-gradient(#a5a5a5 0 1px, transparent 1px 3px) 0 3px / 1px 28px no-repeat; }
.toolbar button { gap: 3px; }

.gridwrap { display: flex; }
table { flex: 1; width: 0; min-width: 0; border-collapse: separate; border-spacing: 0; table-layout: fixed; background: #fff; }
.c0 { width: 12px; }
.c1 { width: 52px; }
.c2 { width: 65px; }
.c3 { width: 87px; }
.c4 { width: 84px; }
th, td { height: 13px; padding: 0 0 0 3px; border-right: 1px solid #dddde6; line-height: 12px; text-align: left; white-space: nowrap; overflow: hidden; }
th { background: linear-gradient(#dcebfd, #bedafd 45%, #aecffb 50%, #bcd9fd); border-color: #a9c6ea; color: #111; }
th .tri { float: right; margin: 4px 1px 0; border-width: 4px 4px 0; }
.sorted { background: linear-gradient(#ffdca2, #ffc069 45%, #fdaa40 50%, #ffd274); }
.filters td { height: 15px; background: #ffffe1; border-bottom: 1px solid #d5d5c8; }
tbody tr:nth-child(even) { background: #e4e9fe; }
tbody td { border-bottom: 1px solid #eeeef4; }
td.gut, .filters td.gut { background: linear-gradient(#dcebfd, #bedafd 40%, #a9cdfb 50%, #b8d7fd); border-bottom: 1px solid #c8dcf4; }
td.masked { position: relative; overflow: visible; color: #6b6670; }
.name { display: flex; justify-content: space-between; padding-right: 8px; }
.smear { position: absolute; top: 2px; left: -5px; height: 9px; background: linear-gradient(transparent, rgba(140, 128, 140, .35) 15%, rgba(160, 150, 160, .4) 35%, rgba(115, 100, 115, .5) 50%, rgba(160, 150, 160, .4) 65%, rgba(130, 118, 130, .45) 82%, transparent); -webkit-mask-image: linear-gradient(90deg, transparent, rgba(0, 0, 0, .35) 10px, #000 26px, #000 70%, transparent); mask-image: linear-gradient(90deg, transparent, rgba(0, 0, 0, .35) 8px, #000 22px, #000 70%, transparent); }
.place { display: flex; align-items: center; padding-right: 2px; }
.place .long { position: static; flex: 1; margin: 0 -12px; -webkit-mask-image: linear-gradient(90deg, transparent, #000 16px, #000 85%, transparent); mask-image: linear-gradient(90deg, transparent, #000 16px, #000 85%, transparent); }
.scroll { width: 13px; display: flex; flex-direction: column; align-items: center; padding: 4px 0; background: #f1f1f3; color: #444; }
.track { flex: 1; align-self: stretch; display: flex; padding: 134px 1px; }
.thumb { flex: 1; border: 1px solid #a5a5a5; border-radius: 2px; background: repeating-linear-gradient(#777 0 1px, transparent 1px 2px) center / 4px 6px no-repeat, linear-gradient(90deg, #f6f6f6, #d6d6d8); }
.split { display: flex; align-items: center; justify-content: center; gap: 2px; height: 5px; padding-left: 22px; border: 1px solid #a0a0a0; border-width: 1px 0; color: #000; }
.split b { width: 38px; height: 1px; background: repeating-linear-gradient(90deg, #555 0 1px, transparent 1px 3px); }
.sheets { display: flex; height: 14px; }
.sheets button { padding: 0 1px; border-right: 1px solid #a8a8a8; border-bottom: 1px solid #c8c8c8; }
.sheets .on { background: #fff; }

.status { display: flex; align-items: center; height: 21px; padding: 0 196px 2px 0; }
.cell { flex: 1; align-self: stretch; margin: 1px 3px 0 241px; border-left: 1px solid #b0b0b0; background: repeating-linear-gradient(#a5a5a5 0 1px, transparent 1px 3px) right / 1px 16px no-repeat; }
.heap { width: 90px; height: 14px; border: 1px solid #b5b5b0; background: linear-gradient(90deg, #ffffd2 60%, #f4f4f0 60%); text-align: center; }
.status button { width: 11px; }
.status .end { width: 5px; height: 16px; background: repeating-linear-gradient(#a5a5a5 0 1px, transparent 1px 3px) right / 1px 16px no-repeat; }

.taskbar { display: flex; align-items: center; height: 28px; padding-left: 5px; border-top: 1px solid #3c78bb; background: linear-gradient(45deg, transparent 36%, rgba(190, 215, 245, .35) 50%, transparent 64%) right 84px top / 60px 28px no-repeat, linear-gradient(90deg, #164f8c, #0b56ac 14%, #005cc0 30%, #0860c4 75%, #0d4ea6 86%, #123e7e); color: #fff; }
.taskbar > button:nth-child(2) { margin-left: 19px; }
.running { justify-content: center; width: 42px; height: 28px; margin-left: 2px; border: 1px solid #7fb1e0; background: linear-gradient(135deg, #c3d8ee, #4c85c2 55%, #2d70ba); }
.tray { display: flex; align-items: center; gap: 5px; margin-left: auto; margin-right: -5px; font: 9px/12px "Liberation Sans", sans-serif; }
.tray span { margin-bottom: 3px; }
.tray .tri { margin: 4px 3px 0 7px; }
.tray svg { margin-top: 2px; }
</style>
